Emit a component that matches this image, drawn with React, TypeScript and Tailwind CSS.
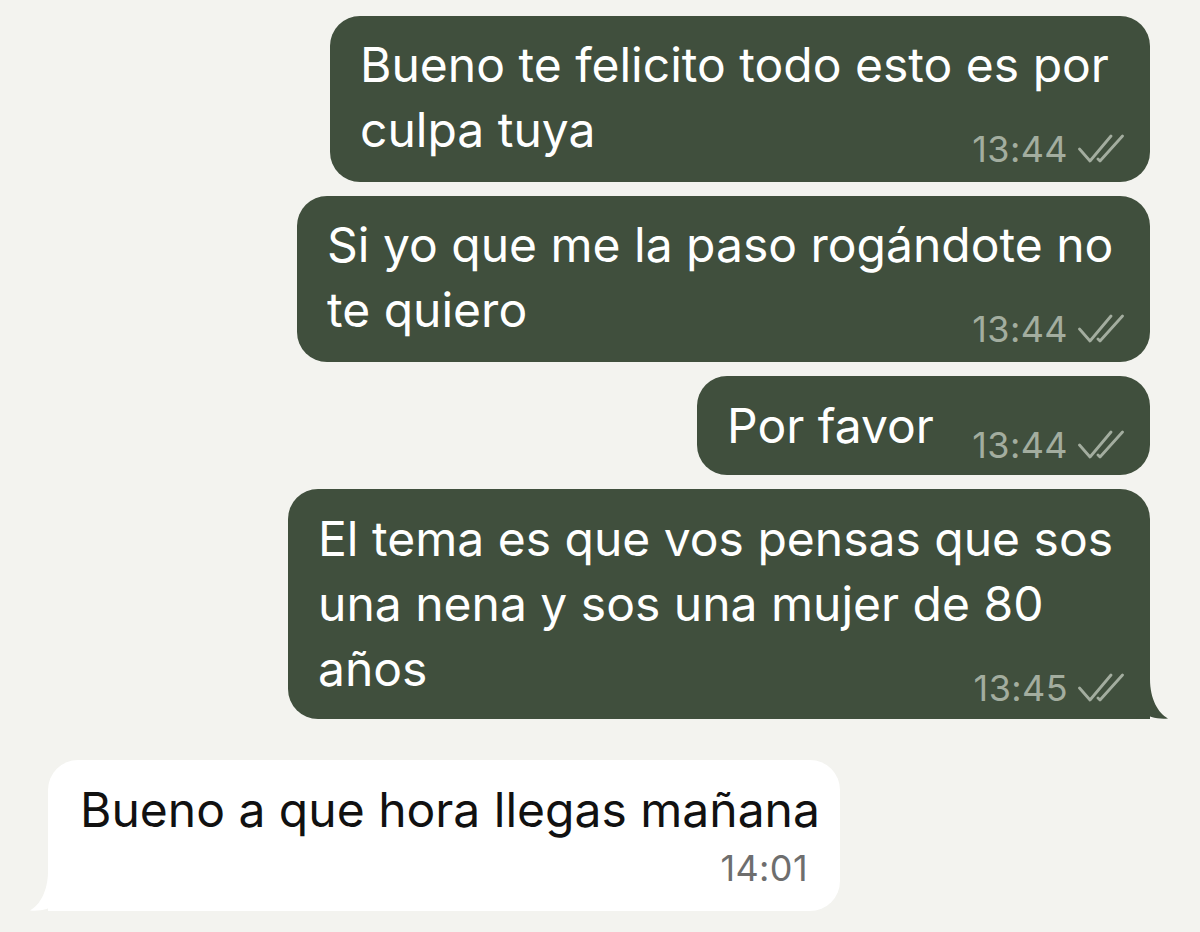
import React from "react";

const font = { fontFamily: "Inter, 'Liberation Sans', sans-serif" };

const Ticks = () => (
  <svg width="46" height="30" viewBox="0 0 46 30" fill="none" className="ml-[10px]">
    <path d="M1.5 15 L12 27 L33 2" stroke="#a3ad9f" strokeWidth="2.8" strokeLinecap="round" strokeLinejoin="round" />
    <path d="M20 25 L22 27 L44.5 2" stroke="#a3ad9f" strokeWidth="2.8" strokeLinecap="round" strokeLinejoin="round" />
  </svg>
);

const Meta = ({ time }: { time: string }) => (
  <div className="flex items-center shrink-0 text-[36px] tracking-[0.4px] leading-none text-[#a3ad9f] translate-y-[5px] mr-[-4px]">
    <span>{time}</span>
    <Ticks />
  </div>
);

const Out = ({
  lines,
  time,
  className,
  tail,
}: {
  lines: string[];
  time: string;
  className: string;
  tail?: boolean;
}) => (
  <div className={`relative bg-[#404f3d] text-white rounded-[30px] ${className}`}>
    {lines.slice(0, -1).map((l) => (
      <div key={l} className="whitespace-nowrap">{l}</div>
    ))}
    <div className="flex items-end justify-between gap-6">
      <span className="whitespace-nowrap">{lines[lines.length - 1]}</span>
      <Meta time={time} />
    </div>
    {tail && (
      <svg className="absolute right-[-18px] bottom-0" width="32" height="40" viewBox="0 0 32 40">
        <path d="M0 0 L14 0 C14 20 22 34 32 39.5 C22 40.5 12 38 6 33 C3 36 0 40 0 40 Z" fill="#404f3d" />
      </svg>
    )}
  </div>
);

export default function App() {
  return (
    <div className="w-[1200px] h-[932px] bg-[#f3f3ef] overflow-hidden text-[48px] leading-[65px]" style={font}>
      <div className="flex flex-col items-end pr-[50px] pt-[16px] gap-[14px]">
        <Out
          className="w-[820px] pl-[30px] pr-[30px] pt-[16px] pb-[20px]"
          lines={["Bueno te felicito todo esto es por", "culpa tuya"]}
          time="13:44"
        />
        <Out
          className="w-[853px] pl-[30px] pr-[30px] pt-[16px] pb-[20px]"
          lines={["Si yo que me la paso rogándote no", "te quiero"]}
          time="13:44"
        />
        <Out
          className="w-[453px] pl-[30px] pr-[30px] pt-[17px] pb-[17px]"
          lines={["Por favor"]}
          time="13:44"
        />
        <Out
          className="w-[862px] pl-[30px] pr-[30px] pt-[17px] pb-[18px] rounded-br-none"
          lines={["El tema es que vos pensas que sos", "una nena y sos una mujer de 80", "años"]}
          time="13:45"
          tail
        />
      </div>
      <div className="pl-[48px] pt-[41px]">
        <div className="relative w-[792px] bg-white rounded-[30px] rounded-bl-none text-[#111] pl-[32px] pr-[32px] pt-[17px] pb-[23px]">
          <div className="whitespace-nowrap">Bueno a que hora llegas mañana</div>
          <div className="flex justify-end text-[36px] tracking-[0.4px] leading-[40px] text-[#6e6e6e] mt-[6px]">14:01</div>
          <svg className="absolute left-[-18px] bottom-0" width="32" height="40" viewBox="0 0 32 40">
            <path d="M32 0 L18 0 C18 20 10 34 0 39.5 C10 40.5 20 38 26 33 C29 36 32 40 32 40 Z" fill="#ffffff" />
          </svg>
        </div>
      </div>
    </div>
  );
}
